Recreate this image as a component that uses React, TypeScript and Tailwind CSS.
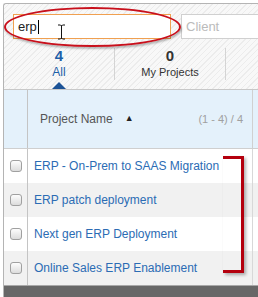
import React from 'react';

const projects = [
  'ERP - On-Prem to SAAS Migration',
  'ERP patch deployment',
  'Next gen ERP Deployment',
  'Online Sales ERP Enablement',
];

const Checkbox = () => (
  <div className="w-[12px] h-[12px] rounded-[3px] border border-[#a0a0a0] bg-[linear-gradient(#fdfdfd,#dcdcdc)]" />
);

const App: React.FC = () => {
  return (
    <div className="relative w-[258px] h-[297px] overflow-hidden bg-white font-['Liberation_Sans',Arial,sans-serif]">
      <div className="mt-[3px] ml-[3px] h-[294px] flex flex-col border-l border-t border-[#b4b4b4] rounded-tl-[3px] bg-[repeating-linear-gradient(135deg,#f8f8f8_0px,#f8f8f8_3px,#ececec_3px,#ececec_4px)]">
        {/* search row */}
        <div className="flex gap-[10px] pt-[10px] pl-[9px]">
          <div className="w-[158px] h-[25px] shrink-0 border border-[#f0a050] bg-white flex items-center pl-[4px] text-[13px] text-[#222]">
            erp<span className="w-px h-[14px] bg-black ml-px" />
          </div>
          <div className="w-[100px] h-[25px] shrink-0 border border-r-0 border-[#d0d0d0] bg-white flex items-center pl-[4px] text-[13px] text-[#bbb]">
            Client
          </div>
        </div>

        {/* tabs */}
        <div className="flex h-[50px] pt-[9px]">
          <div className="relative w-[111px] flex flex-col items-center border-r border-[#d4d4d4] h-[32px]">
            <div className="text-[15px] font-bold leading-[15px] text-[#1d5fa8]">4</div>
            <div className="text-[12px] leading-[13px] mt-[3px] text-[#1d5fa8]">All</div>
            <div className="absolute top-[34px] w-0 h-0 border-l-[7px] border-r-[7px] border-b-[7px] border-l-transparent border-r-transparent border-b-[#1d5396]" />
          </div>
          <div className="w-[111px] flex flex-col items-center border-r border-[#d4d4d4] h-[32px]">
            <div className="text-[15px] font-bold leading-[15px] text-[#333]">0</div>
            <div className="text-[11px] leading-[13px] mt-[3px] text-[#333]">My Projects</div>
          </div>
        </div>

        {/* table */}
        <div className="flex-1 flex flex-col border-t border-[#c8c8c8]">
          <div className="flex h-[59px] bg-[#e4f1fb] border-b border-[#cfcfcf]">
            <div className="w-[24px] border-r border-[#c4c4c4]" />
            <div className="w-[225px] flex items-center pl-[12px] border-r border-[#d0d0d0]">
              <span className="text-[12px] text-[#555]">Project Name</span>
              <span className="text-[9px] text-[#222] ml-[12px]">▲</span>
              <span className="ml-auto mr-[9px] text-[11px] text-[#a0a0a0]">(1 - 4) / 4</span>
            </div>
            <div className="flex-1" />
          </div>
          {projects.map((p, i) => (
            <div key={p} className={`flex h-[34px] ${i % 2 === 1 ? 'bg-[#f1f1f1]' : 'bg-white'}`}>
              <div className="w-[24px] border-r border-[#c4c4c4] flex items-center justify-center">
                <Checkbox />
              </div>
              <div className="w-[225px] flex items-center pl-[6px] border-r border-[#d8d8d8] text-[12px] text-[#2b6cb4]">
                {p}
              </div>
              <div className="flex-1" />
            </div>
          ))}
          <div className="h-px bg-[#a8a8a8]" />
          <div className="flex-1 bg-[#676767]" />
        </div>
      </div>

      {/* red ellipse highlight */}
      <div className="absolute left-[4px] top-[7px] w-[177px] h-[40px] rounded-[50%] border-2 border-[#c8101c] shadow-[1px_2px_2px_rgba(0,0,0,0.25)]" />

      {/* I-beam cursor */}
      <svg className="absolute left-[57px] top-[24px]" width="9" height="16" viewBox="0 0 9 16">
        <path d="M1 1h2.5M5.5 1H8M4.5 1.5v13M1 15h2.5M5.5 15H8M3.5 1L4.5 2M5.5 1L4.5 2M3.5 15L4.5 14M5.5 15L4.5 14" stroke="#111" strokeWidth="1" fill="none" />
      </svg>

      {/* red bracket */}
      <div className="absolute left-[223px] top-[156px] w-[21px] h-[117px] border-t-[3px] border-r-[3px] border-b-[3px] border-[#b4000e] shadow-[2px_2px_3px_rgba(0,0,0,0.3)]" />
    </div>
  );
};

export default App;
